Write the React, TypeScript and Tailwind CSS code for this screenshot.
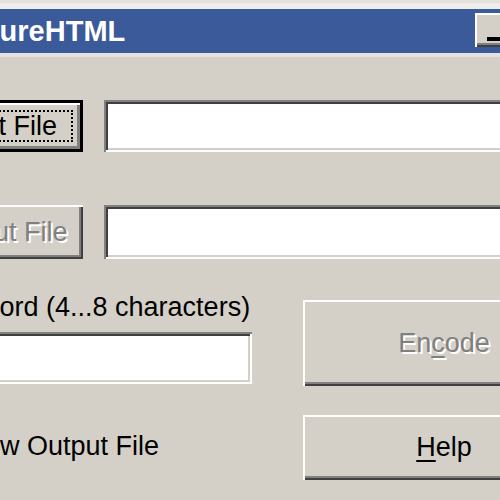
export default function App() {
  // Win2000 style bevels, scaled up ~2.5x
  const raised =
    "shadow-[inset_2px_2px_0_#ffffff,inset_-2px_-2px_0_#404040,inset_-4px_-4px_0_#808080]";
  const sunken =
    "shadow-[inset_2px_2px_0_#808080,inset_-2px_-2px_0_#ffffff,inset_4px_4px_0_#404040,inset_-4px_-4px_0_#d4d0c8]";

  return (
    <div className="w-[500px] h-[500px] overflow-hidden bg-[#d4d0c8] font-['Liberation_Sans',Arial,sans-serif] text-black">
      {/* window frame top */}
      <div className="h-[9px] bg-[#efeeeb] border-t-[3px] border-[#e2e1de]" />

      {/* title bar */}
      <div className="h-[44px] bg-[#3b5a9a] flex">
        <span className="-ml-[52px] mt-[7px] text-[29px] font-bold text-white leading-[30px] whitespace-nowrap">
          SecureHTML
        </span>
        <div
          className={`ml-auto -mr-[9px] mt-[4px] w-[34px] h-[34px] shrink-0 bg-[#d4d0c8] ${raised} pl-[12px] pt-[24px]`}
        >
          <div className="w-[15px] h-[4px] bg-black" />
        </div>
      </div>
      <div className="h-[4px] bg-[#e4e2dc]" />

      {/* dialog body */}
      <div className="-ml-[80px] w-[800px] pt-[43px] text-[27px]">
        {/* input file row */}
        <div className="flex gap-[21px] h-[52px]">
          <button className="w-[163px] h-full shrink-0 border-[3px] border-black bg-[#d4d0c8] p-[7px] shadow-[inset_2px_2px_0_#ffffff,inset_-3px_-3px_0_#808080]">
            <div className="h-full border-2 border-dotted border-black flex items-center justify-center leading-none">
              Input File
            </div>
          </button>
          <div className={`w-[600px] h-full bg-white ${sunken}`} />
        </div>

        {/* output file row */}
        <div className="flex gap-[21px] h-[54px] mt-[53px]">
          <button
            className={`w-[163px] h-full shrink-0 bg-[#d4d0c8] ${raised} flex items-center justify-center leading-none text-[#808080] [text-shadow:2px_2px_0_#ffffff]`}
          >
            Output File
          </button>
          <div className={`w-[600px] h-full bg-white ${sunken}`} />
        </div>

        {/* password + buttons */}
        <div className="flex gap-[51px] mt-[33px]">
          <div className="w-[332px] shrink-0">
            <div className="leading-[31px] whitespace-nowrap">Password (4...8 characters)</div>
            <div className={`mt-[9px] h-[52px] bg-white ${sunken}`} />
            <div className="mt-[47px] flex items-center gap-[6px] leading-[31px] whitespace-nowrap">
              <div className={`w-[26px] h-[26px] bg-white ${sunken}`} />
              <span>Show Output File</span>
            </div>
          </div>

          <div className="w-[282px] shrink-0">
            <button
              className={`mt-[8px] w-full h-[86px] bg-[#d4d0c8] ${raised} flex items-center justify-center leading-none text-[#808080] [text-shadow:2px_2px_0_#ffffff]`}
            >
              En<span className="underline decoration-2 underline-offset-[4px]">c</span>ode
            </button>
            <button
              className={`mt-[29px] w-full h-[65px] bg-[#d4d0c8] ${raised} flex items-center justify-center leading-none`}
            >
              <span className="underline decoration-2 underline-offset-[4px]">H</span>elp
            </button>
          </div>
        </div>
      </div>
    </div>
  );
}
